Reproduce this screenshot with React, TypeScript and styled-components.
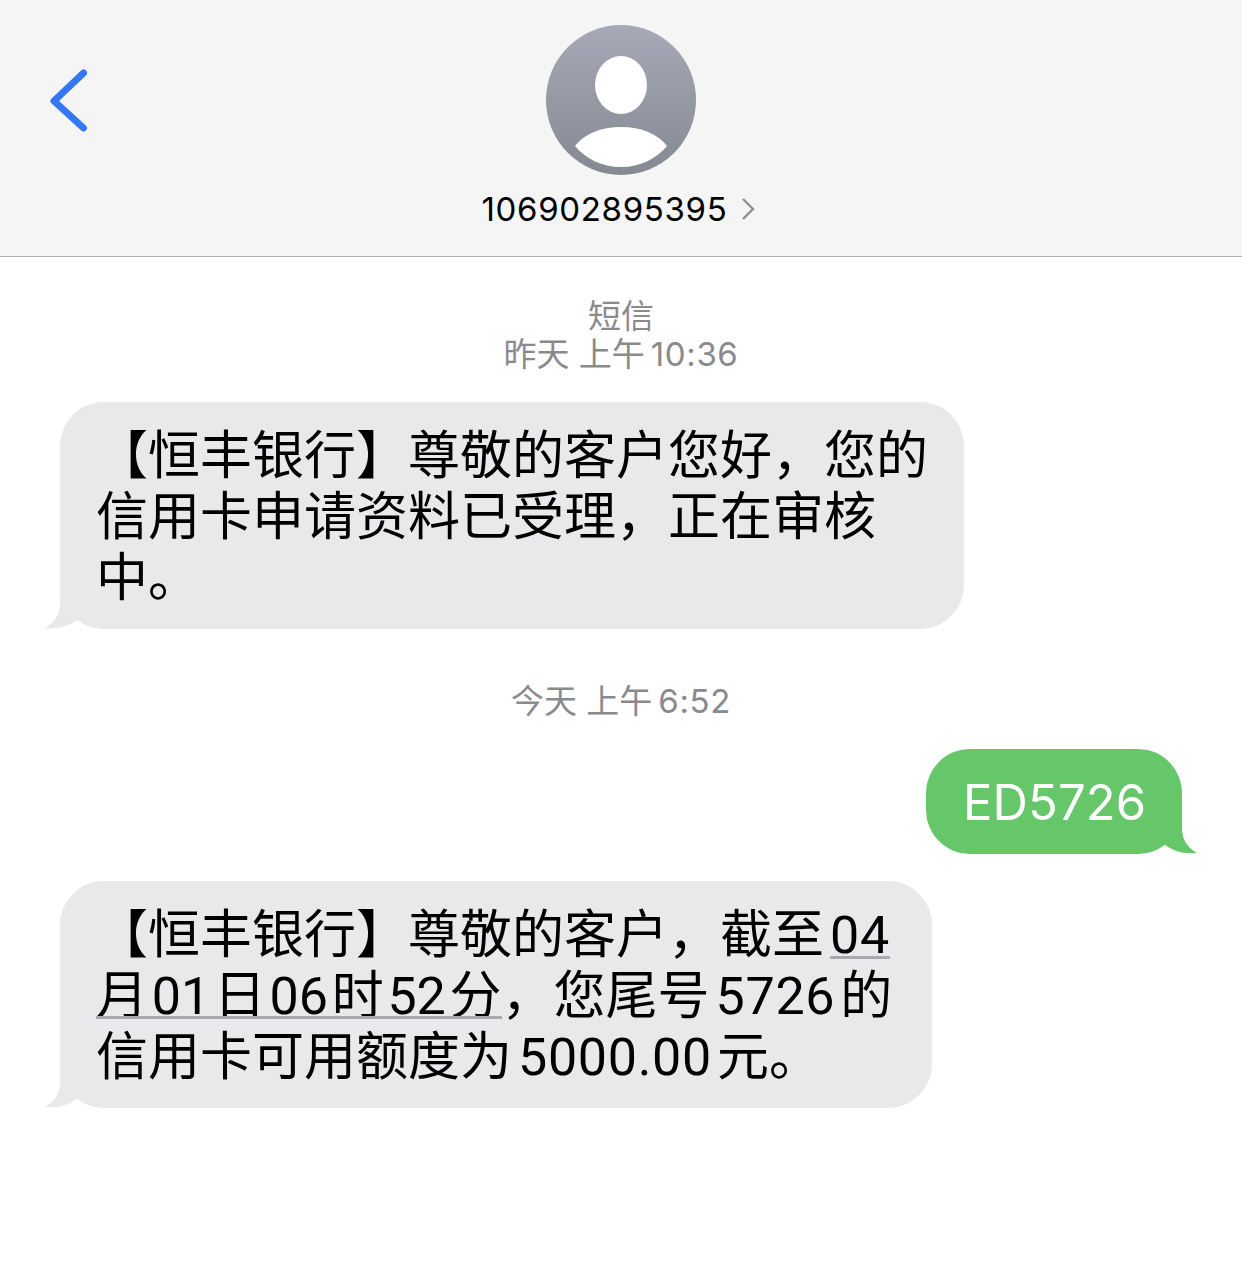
import React from 'react'
import styled, { createGlobalStyle } from 'styled-components'

const GlobalStyle = createGlobalStyle`
    html, body {
        margin: 0;
        padding: 0;
        background: #fff;
    }
    body {
        font-family: "Inter", "Noto Sans CJK SC", sans-serif;
    }
`

const App = () => {
    return (
        <>
            <GlobalStyle />
            <Page>
                <Header>
                    <BackIcon viewBox="0 0 48 72">
                        <path d="M39.5 8 L10 36 L39.5 63" />
                    </BackIcon>
                    <Avatar viewBox="0 0 150 150">
                        <defs>
                            <linearGradient id="avatarFill" x1="0" y1="0" x2="0" y2="1">
                                <stop offset="0" stopColor="#a7aab6" />
                                <stop offset="1" stopColor="#858993" />
                            </linearGradient>
                        </defs>
                        <circle cx="75" cy="75" r="75" fill="url(#avatarFill)" />
                        <ellipse cx="75" cy="60" rx="26" ry="29" fill="#fff" />
                        <path d="M29 121 C38 109 55 102 75 102 C95 102 112 109 121 121 C110 134 94 142 75 142 C56 142 40 134 29 121 Z" fill="#fff" />
                    </Avatar>
                    <Contact>
                        <ContactNumber>106902895395</ContactNumber>
                        <ContactChevron viewBox="0 0 14 24">
                            <path d="M2 2 L12 12 L2 22" />
                        </ContactChevron>
                    </Contact>
                </Header>
                <Thread>
                    <Stamp>
                        <span>短信</span>
                        <span>昨天 上午<StampTime>10:36</StampTime></span>
                    </Stamp>
                    <Received>
                        <ReceivedTail viewBox="0 0 66 50">
                            <path d="M16 0 L16 24 C16 34 12 43 1 49 C12 50 27 48 36 38 C44 46 54 50 66 50 L66 0 Z" />
                        </ReceivedTail>
                        <BubbleText>
                            <Line>【恒丰银行】尊敬的客户您好，您的</Line>
                            <Line>信用卡申请资料已受理，正在审核</Line>
                            <Line>中。</Line>
                        </BubbleText>
                    </Received>
                    <TodayStamp>
                        <span>今天 上午<StampTime>6:52</StampTime></span>
                    </TodayStamp>
                    <Sent>
                        <SentTail viewBox="0 0 66 50">
                            <path d="M50 0 L50 24 C50 34 54 43 65 49 C54 50 39 48 30 38 C22 46 12 50 0 50 L0 0 Z" />
                        </SentTail>
                        <SentText>ED5726</SentText>
                    </Sent>
                    <ReceivedLast>
                        <ReceivedTail viewBox="0 0 66 50">
                            <path d="M16 0 L16 24 C16 34 12 43 1 49 C12 50 27 48 36 38 C44 46 54 50 66 50 L66 0 Z" />
                        </ReceivedTail>
                        <BubbleText>
                            <Line>【恒丰银行】尊敬的客户，截至<Num><Detected>04</Detected></Num></Line>
                            <Line>
                                <Detected>月<DateNum>01</DateNum>日<DateNum>06</DateNum>时<DateNum>52</DateNum>分</Detected>，您尾号<Num>5726</Num>的
                            </Line>
                            <Line>信用卡可用额度为<Num>5000.00</Num>元。</Line>
                        </BubbleText>
                    </ReceivedLast>
                </Thread>
            </Page>
        </>
    )
}

const Page = styled.div`
    width: 1242px;
    height: 1274px;
    overflow: hidden;
    background: #fff;
`

const Header = styled.header`
    position: relative;
    box-sizing: border-box;
    height: 257px;
    padding-top: 25px;
    display: flex;
    flex-direction: column;
    align-items: center;
    background: #f5f5f5;
    border-bottom: 1px solid #b1b1b1;
`

const BackIcon = styled.svg`
    position: absolute;
    left: 44px;
    top: 65px;
    width: 48px;
    height: 72px;
    fill: none;
    stroke: #3478f6;
    stroke-width: 7;
    stroke-linecap: round;
    stroke-linejoin: round;
`

const Avatar = styled.svg`
    width: 150px;
    height: 150px;
    flex: none;
`

const Contact = styled.div`
    display: flex;
    align-items: center;
    gap: 13px;
    margin-top: 14px;
    margin-left: -6px;
    height: 40px;
`

const ContactNumber = styled.span`
    font-size: 33px;
    letter-spacing: 0.67px;
    color: #000;
`

const ContactChevron = styled.svg`
    width: 14px;
    height: 24px;
    fill: none;
    stroke: #8e8e93;
    stroke-width: 2.4;
`

const Thread = styled.main`
    display: flex;
    flex-direction: column;
    padding: 40px 60px 0;
`

const Stamp = styled.div`
    display: flex;
    flex-direction: column;
    align-items: center;
    color: #8a8a8e;
    font-size: 33px;
    line-height: 38px;
`

const StampTime = styled.span`
    margin-left: 6px;
    letter-spacing: 0.6px;
`

const TodayStamp = styled(Stamp)`
    margin-top: 53px;
`

const Bubble = styled.div`
    position: relative;
    border-radius: 44px;
`

const Received = styled(Bubble)`
    align-self: flex-start;
    width: 904px;
    box-sizing: border-box;
    margin-top: 29px;
    padding: 23px 0 21px 36px;
    background: #e9e9eb;
`

const ReceivedLast = styled(Received)`
    width: 872px;
    margin-top: 27px;
`

const Tail = styled.svg`
    position: absolute;
    bottom: 0;
    width: 66px;
    height: 50px;
`

const ReceivedTail = styled(Tail)`
    left: -16px;
    fill: #e9e9eb;
`

const SentTail = styled(Tail)`
    right: -16px;
    fill: #65c66a;
`

const BubbleText = styled.div`
    position: relative;
    font-size: 52px;
    line-height: 61px;
    color: #000;
`

const Line = styled.div`
    height: 61px;
    white-space: nowrap;
`

const Num = styled.span`
    padding: 0 5px 0 6px;
    letter-spacing: 0.7px;
    font-family: "Roboto", "Inter", sans-serif;
`

const DateNum = styled(Num)`
    padding: 0 3.7px;
    letter-spacing: 0;
`

const Detected = styled.span`
    position: relative;
    display: inline-block;
    height: 61px;

    &::after {
        content: "";
        position: absolute;
        left: 0;
        right: 0;
        top: 51px;
        height: 3px;
        background: #a9a9ad;
    }
`

const Sent = styled(Bubble)`
    align-self: flex-end;
    width: 256px;
    box-sizing: border-box;
    margin-top: 29px;
    padding: 23px 0 21px 37px;
    background: #65c66a;
`

const SentText = styled.div`
    position: relative;
    font-size: 49px;
    line-height: 61px;
    letter-spacing: 0.1px;
    color: #fff;
`

export default App
